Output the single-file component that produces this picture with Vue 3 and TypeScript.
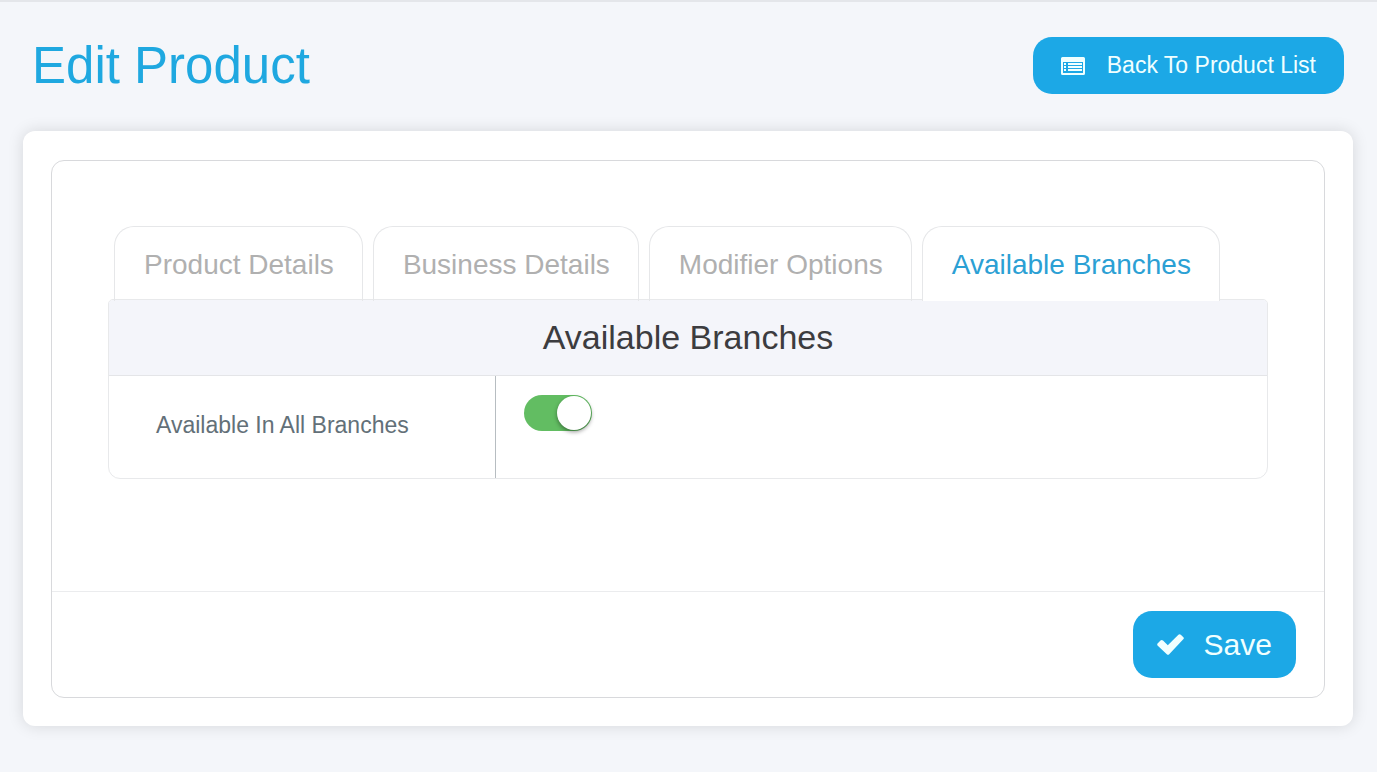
<script setup lang="ts">
import { ref } from 'vue'

const tabs: string[] = ['Product Details', 'Business Details', 'Modifier Options', 'Available Branches']
const activeTab = ref<string>('Available Branches')
const allBranches = ref<boolean>(true)
</script>

<template>
  <main class="page">
    <header class="page-header">
      <h1 class="title">Edit Product</h1>
      <a class="button back" href="#products">
        <svg class="list-icon" viewBox="0 0 24 18" aria-hidden="true">
          <path
            fill="#f0ffff"
            fill-rule="evenodd"
            d="M1.500 0h21A1.500 1.500 0 0 1 24 1.500v15a1.500 1.500 0 0 1-1.500 1.500h-21A1.500 1.500 0 0 1 0 16.500v-15A1.500 1.500 0 0 1 1.500 0zM2 5v11h20V5z"
          />
          <path fill="#f0ffff" d="M3 6h2v2H3zM3 9h2v2H3zM3 12h2v2H3zM7 6h14v2H7zM7 9h14v2H7zM7 12h14v2H7z" />
        </svg>
        <span>Back To Product List</span>
      </a>
    </header>

    <section class="card">
      <form class="panel" @submit.prevent>
        <div class="content">
          <div class="tabs" role="tablist">
            <button
              v-for="tab in tabs"
              :key="tab"
              type="button"
              role="tab"
              class="tab"
              :class="{ active: tab === activeTab }"
              :aria-selected="tab === activeTab"
              @click="activeTab = tab"
            >
              {{ tab }}
            </button>
          </div>
          <div class="tab-body" role="tabpanel">
            <h2 class="section-title">{{ activeTab }}</h2>
            <div class="field">
              <label class="field-label" for="all-branches">Available In All Branches</label>
              <div class="field-value">
                <input id="all-branches" v-model="allBranches" class="switch" type="checkbox" role="switch" />
              </div>
            </div>
          </div>
        </div>
        <footer class="footer">
          <button class="button save" type="submit">
            <svg class="check-icon" viewBox="0 0 27 21" aria-hidden="true">
              <path
                fill="#f0ffff"
                d="M26.500 4.900 12.200 20.200Q11 21.300 9.800 20.200L.8 11.800Q-.4 10.500.8 9.300L3.500 6.600Q4.700 5.500 6 6.600L10.800 11.300 21.400.8Q22.600-.3 23.800.8L26.400 3.200Q27.200 4.100 26.500 4.900z"
              />
            </svg>
            <span>Save</span>
          </button>
        </footer>
      </form>
    </section>
  </main>
</template>

<style>
body {
  margin: 0;
  background: #f4f6fa;
}
</style>

<style scoped>
.page {
  box-sizing: border-box;
  min-height: 100vh;
  padding: 0 24px 40px 23px;
  border-top: 2px solid #e4e6ea;
  background: #f4f6fa;
  font-family: 'Liberation Sans', Arial, sans-serif;
}

.page-header {
  display: flex;
  align-items: center;
  justify-content: space-between;
  padding: 35px 9px 37px;
}

.title {
  margin: 0;
  color: #1fa8e0;
  font-size: 51px;
  font-weight: 400;
  line-height: 54px;
}

.button {
  display: flex;
  align-items: center;
  border: 0;
  border-radius: 19px;
  background: #1ca8e6;
  color: #f0ffff;
  font-family: inherit;
  text-decoration: none;
  cursor: pointer;
}

.back {
  gap: 22px;
  padding: 0 28px;
  font-size: 23px;
  line-height: 57px;
}

.list-icon {
  width: 24px;
  height: 18px;
}

.card {
  padding: 29px 28px 28px;
  border-radius: 12px;
  background: #fff;
  box-shadow: 0 0 16px rgba(0, 0, 0, 0.13);
}

.panel {
  border: 1px solid #d8d9dc;
  border-radius: 13px;
}

.content {
  padding: 65px 56px 112px;
}

.tabs {
  position: relative;
  z-index: 1;
  display: flex;
  gap: 10px;
  margin-bottom: -2px;
  padding: 0 6px;
}

.tab {
  padding: 2px 28px 0 29px;
  border: 1px solid #e6e7e9;
  border-bottom: 0;
  border-radius: 20px 20px 0 0;
  background: transparent;
  color: #b0b0b0;
  font-family: inherit;
  font-size: 28px;
  line-height: 72px;
  white-space: nowrap;
  cursor: pointer;
}

.tab.active {
  background: #fff;
  color: #2ba0d4;
}

.tab-body {
  overflow: hidden;
  border: 1px solid #e8e9eb;
  border-radius: 5px 5px 12px 12px;
}

.section-title {
  margin: 0;
  border-bottom: 1px solid #e4e5e8;
  background: #f4f5fa;
  color: #3c3c3f;
  font-size: 34px;
  font-weight: 400;
  line-height: 75px;
  text-align: center;
}

.field {
  display: grid;
  grid-template-columns: 1fr 2fr;
  min-height: 102px;
}

.field-label {
  padding: 0 47px;
  color: #637078;
  font-size: 23px;
  line-height: 98px;
}

.field-value {
  padding: 19px 28px;
  border-left: 1px solid #b7bdc1;
}

.switch {
  display: flex;
  box-sizing: border-box;
  width: 68px;
  height: 36px;
  margin: 0;
  padding: 1px;
  border-radius: 18px;
  appearance: none;
  background: #c8c8c8;
  cursor: pointer;
}

.switch::before {
  width: 34px;
  height: 34px;
  border-radius: 50%;
  background: #fff;
  box-shadow: 0 2px 4px rgba(0, 0, 0, 0.4);
  content: '';
}

.switch:checked {
  justify-content: flex-end;
  background: #62bd62;
}

.footer {
  display: flex;
  justify-content: flex-end;
  padding: 19px 28px;
  border-top: 1px solid #ebecee;
}

.save {
  gap: 20px;
  padding: 0 24px;
  font-size: 30px;
  line-height: 67px;
}

.check-icon {
  width: 27px;
  height: 21px;
}
</style>
